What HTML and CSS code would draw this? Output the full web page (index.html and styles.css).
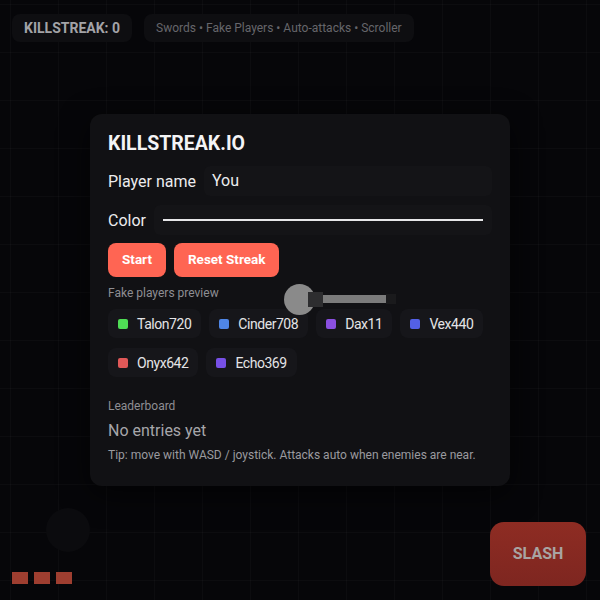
FILE: index.html
```html
<html><head>
	<meta charset="utf-8">
	<title>KILLSTREAK.IO</title>
	<link rel="stylesheet" href="styles.css">
</head>
<body>
	<div class="game" id="game">
		<!-- HUD -->
		<div class="hud">
			<div class="hud-chip streak" id="streak">KILLSTREAK: 0</div>
			<div class="hud-chip info">Swords • Fake Players • Auto-attacks • Scroller</div>
		</div>

		<!-- 菜单 -->
		<div class="menu">
			<div class="panel">
				<h1 class="title">KILLSTREAK.IO</h1>
				<div class="row">
					<label class="row-label">Player name</label>
					<div class="field">You</div>
				</div>
				<div class="row">
					<label class="row-label">Color</label>
					<div class="field color-field"><span class="swatch"></span></div>
				</div>
				<div class="buttons">
					<a href="javascript:void(0)" class="btn">Start</a>
					<a href="javascript:void(0)" class="btn">Reset Streak</a>
				</div>
				<div class="small-label">Fake players preview</div>
				<div class="chips">
					<span class="chip"><i class="dot" style="background:#4fdc55"></i>Talon720</span>
					<span class="chip"><i class="dot" style="background:#4f86e6"></i>Cinder708</span>
					<span class="chip"><i class="dot" style="background:#8a4fe0"></i>Dax11</span>
					<span class="chip"><i class="dot" style="background:#5360e6"></i>Vex440</span>
					<span class="chip"><i class="dot" style="background:#e05858"></i>Onyx642</span>
					<span class="chip"><i class="dot" style="background:#7750e6"></i>Echo369</span>
				</div>
				<div class="small-label board-label">Leaderboard</div>
				<div class="board">No entries yet</div>
				<div class="tip">Tip: move with WASD / joystick. Attacks auto when enemies are near.</div>
			</div>
		</div>

		<!-- 玩家 -->
		<div class="player">
			<span class="body"></span>
			<span class="hilt"></span>
			<span class="blade"></span>
			<span class="tip-end"></span>
		</div>

		<!-- 控制 -->
		<div class="joystick"></div>
		<div class="lives">
			<span></span><span></span><span></span>
		</div>
		<a href="javascript:void(0)" class="slash">SLASH</a>
	</div>
</body></html>
```

FILE: styles.css
```css
* {
	margin: 0;
	padding: 0;
	box-sizing: border-box;
}

body {
	font-family: Roboto, "Liberation Sans", sans-serif;
	color: #ececee;
	background: #060609;
}

a {
	text-decoration: none;
}

.game {
	width: 600px;
	height: 600px;
	position: relative;
	overflow: hidden;
	background-color: #060609;
	background-image:
		linear-gradient(to right, rgba(255,255,255,0.022) 1px, transparent 1px),
		linear-gradient(to bottom, rgba(255,255,255,0.022) 1px, transparent 1px);
	background-size: 48px 48px;
	background-position: 10px 4px;
}

.hud {
	display: flex;
	gap: 12px;
	padding: 14px 12px;
}
.hud-chip {
	height: 28px;
	line-height: 28px;
	padding: 0 12px;
	border-radius: 8px;
	background: #0e0e11;
}
.streak {
	font-size: 14px;
	font-weight: 700;
	color: #a3a3a7;
}
.info {
	font-size: 12px;
	color: #66666b;
}

.menu {
	display: flex;
	justify-content: center;
	padding-top: 58px;
}
.panel {
	width: 420px;
	height: 372px;
	padding: 18px 18px 0 18px;
	border-radius: 12px;
	background: #111114;
	box-shadow: 0 8px 30px rgba(0,0,0,0.6);
}
.title {
	font-size: 19.5px;
	line-height: 24px;
	font-weight: 700;
	color: #f4f4f6;
}

.row {
	display: flex;
	align-items: center;
	gap: 8px;
	height: 30px;
	margin-top: 10px;
}
.row + .row {
	margin-top: 9px;
}
.row-label {
	font-size: 16px;
	color: #ececee;
}
.field {
	flex: 1;
	height: 30px;
	line-height: 30px;
	padding: 0 8px;
	border-radius: 6px;
	background: #141417;
	font-size: 16px;
	color: #ececee;
}
.color-field {
	display: flex;
	align-items: center;
	padding: 0 9px;
}
.swatch {
	display: block;
	flex: 1;
	height: 2px;
	background: #e6e6e8;
}

.buttons {
	display: flex;
	gap: 8px;
	margin-top: 8px;
}
.btn {
	display: block;
	height: 34px;
	line-height: 33px;
	padding: 0 14px;
	border-radius: 8px;
	background: #ff6553;
	color: #fff;
	font-size: 13.5px;
	font-weight: 700;
}

.small-label {
	font-size: 12px;
	line-height: 14px;
	color: #8e8e93;
	margin-top: 9px;
}

.chips {
	display: flex;
	flex-wrap: wrap;
	gap: 10px 8px;
	margin-top: 9px;
}
.chip {
	display: flex;
	align-items: center;
	gap: 9px;
	height: 29px;
	padding: 0 10px;
	border-radius: 8px;
	background: #16161a;
	font-size: 14px;
	letter-spacing: -0.45px;
	color: #e4e4e6;
}
.dot {
	display: block;
	width: 10px;
	height: 10px;
	border-radius: 2px;
}

.board-label {
	margin-top: 22px;
}
.board {
	font-size: 16px;
	line-height: 22px;
	color: #a6a6aa;
	margin-top: 7px;
}
.tip {
	font-size: 12px;
	line-height: 14px;
	color: #9a9a9f;
	margin-top: 6px;
}

/* 玩家与剑 */
.player .body {
	position: absolute;
	left: 284px;
	top: 284px;
	width: 31px;
	height: 31px;
	border-radius: 50%;
	background: #8a8a8a;
}
.player .hilt {
	position: absolute;
	left: 308px;
	top: 292px;
	width: 15px;
	height: 15px;
	background: #2d2d2f;
}
.player .blade {
	position: absolute;
	left: 323px;
	top: 295px;
	width: 63px;
	height: 8px;
	background: #7b7b7b;
}
.player .tip-end {
	position: absolute;
	left: 386px;
	top: 294px;
	width: 10px;
	height: 10px;
	background: #1a1a1c;
}

.joystick {
	position: absolute;
	left: 46px;
	top: 508px;
	width: 44px;
	height: 44px;
	border-radius: 50%;
	background: #0b0b0e;
}

.lives {
	position: absolute;
	left: 12px;
	bottom: 16px;
	display: flex;
	gap: 6px;
}
.lives span {
	display: block;
	width: 16px;
	height: 12px;
	background: #9e3e30;
}

.slash {
	position: absolute;
	right: 14px;
	bottom: 14px;
	width: 96px;
	height: 64px;
	line-height: 64px;
	text-align: center;
	border-radius: 14px;
	background: linear-gradient(#8e2c23, #7e2620);
	color: #a8a4a2;
	font-size: 16px;
	font-weight: 700;
}
```
